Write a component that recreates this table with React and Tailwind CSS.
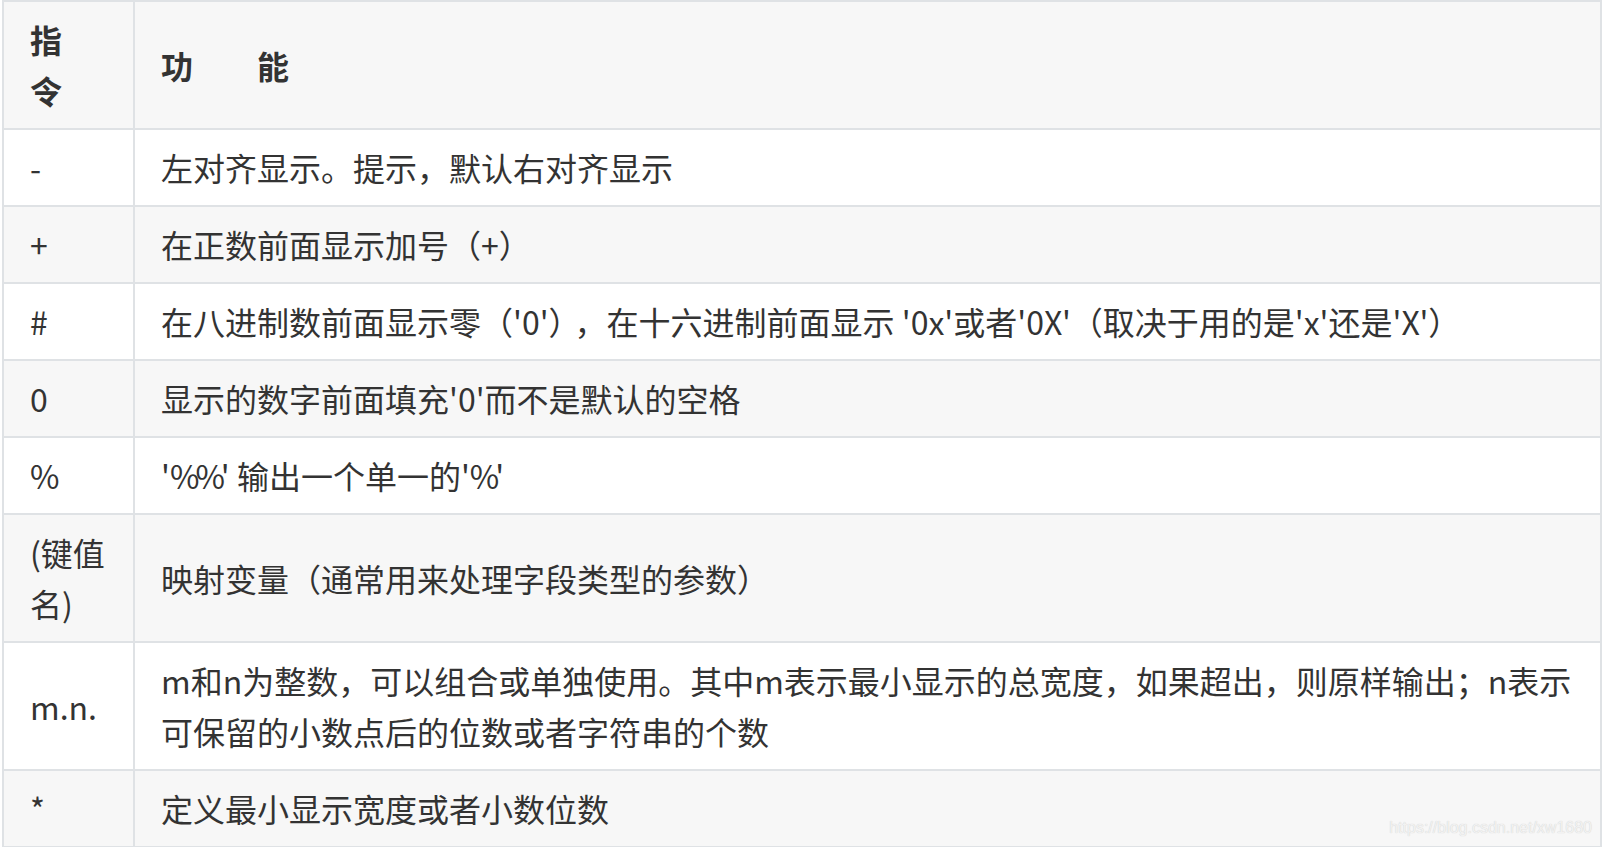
import React from 'react';

const rows = [
  { k: '-', v: '左对齐显示。提示，默认右对齐显示' },
  { k: '+', v: '在正数前面显示加号（+）' },
  {
    k: '#',
    v: (
      <>
        在八进制数前面显示零（'0'）<span className="ml-[10px]">，</span>在十六进制前面显示 '0x'或者'0X'（取决于用的是'x'还是'X'）
      </>
    ),
  },
  { k: '0', v: "显示的数字前面填充'0'而不是默认的空格" },
  { k: '%', v: <>'<span className="tracking-[-4px]">%%</span>' 输出一个单一的'<span className="tracking-[-4px]">%</span>'</> },
  { k: <>(键值<br />名)</>, v: '映射变量（通常用来处理字段类型的参数）' },
  {
    k: 'm.n.',
    v: (
      <>
        m和n为整数，可以组合或单独使用。其中m表示最小显示的总宽度，如果超出，则原样输出；n表示
        <br />
        可保留的小数点后的位数或者字符串的个数
      </>
    ),
  },
  { k: '*', v: '定义最小显示宽度或者小数位数' },
];

function Cell({ children, gray, bold }) {
  return (
    <div
      className={`flex items-center px-[26px] py-[12px] border-r-2 border-b-2 border-[#dfe2e5] ${
        gray ? 'bg-[#f7f7f7]' : 'bg-white'
      } ${bold ? 'font-bold' : ''}`}
    >
      <div className="whitespace-nowrap">{children}</div>
    </div>
  );
}

export default function App() {
  return (
    <div className="relative w-[1602px] h-[847px] overflow-hidden bg-white font-['Noto_Sans_CJK_SC',sans-serif] text-[32px] leading-[51px] text-[#333]">
      <div className="ml-[2px] w-[1600px] grid grid-cols-[131px_1fr] border-t-2 border-l-2 border-[#dfe2e5]">
        <Cell gray bold>
          指<br />令
        </Cell>
        <Cell gray bold>功　　能</Cell>
        {rows.map((r, i) => (
          <React.Fragment key={i}>
            <Cell gray={i % 2 === 1}>{r.k}</Cell>
            <Cell gray={i % 2 === 1}>{r.v}</Cell>
          </React.Fragment>
        ))}
      </div>

      {/* watermark */}
      <div className="absolute right-[10px] bottom-[9px] font-['Liberation_Sans',sans-serif] text-[16px] leading-[20px] text-[#f2f2f2] [text-shadow:0_0_1px_#c8c8c8]">
        https://blog.csdn.net/xw1680
      </div>
    </div>
  );
}
